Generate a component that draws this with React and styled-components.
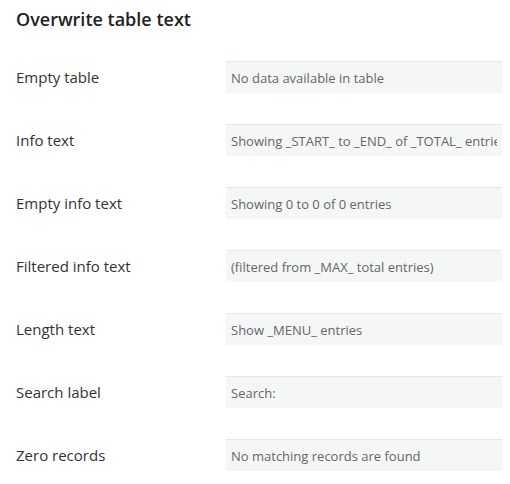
import React from 'react';
import styled, { createGlobalStyle } from 'styled-components';

const GlobalStyle = createGlobalStyle`
    html, body {
        margin: 0;
        padding: 0;
        background: #fff;
    }
    body {
        font-family: "Open Sans", "Noto Sans", sans-serif;
        color: #333;
    }
`;

const Panel = styled.div`
    width: 486px;
    padding: 7px 8px 0 16px;
`;

const Title = styled.h2`
    margin: 0 0 30px;
    font-size: 18px;
    font-weight: 600;
    line-height: 24px;
    color: #222;
`;

const Field = styled.label`
    display: grid;
    grid-template-columns: 210px 276px;
    align-items: center;
    height: 32px;
    margin-bottom: 31px;
`;

const Label = styled.span`
    font-size: 15px;
    color: #333;
`;

const TextInput = styled.input`
    box-sizing: border-box;
    width: 100%;
    height: 32px;
    padding: 0 5px;
    border: none;
    border-top: 1px solid #e4e8e8;
    background: #f5f7f7;
    font-family: inherit;
    font-size: 13px;
    color: #666;
    outline: none;
`;

const fields = [
    ['Empty table', 'No data available in table'],
    ['Info text', 'Showing _START_ to _END_ of _TOTAL_ entries'],
    ['Empty info text', 'Showing 0 to 0 of 0 entries'],
    ['Filtered info text', '(filtered from _MAX_ total entries)'],
    ['Length text', 'Show _MENU_ entries'],
    ['Search label', 'Search:'],
    ['Zero records', 'No matching records are found'],
];

const App = () => (
    <Panel>
        <GlobalStyle />
        <Title>Overwrite table text</Title>
        {fields.map(([label, value]) => (
            <Field key={label}>
                <Label>{label}</Label>
                <TextInput defaultValue={value} />
            </Field>
        ))}
    </Panel>
);

export default App;
